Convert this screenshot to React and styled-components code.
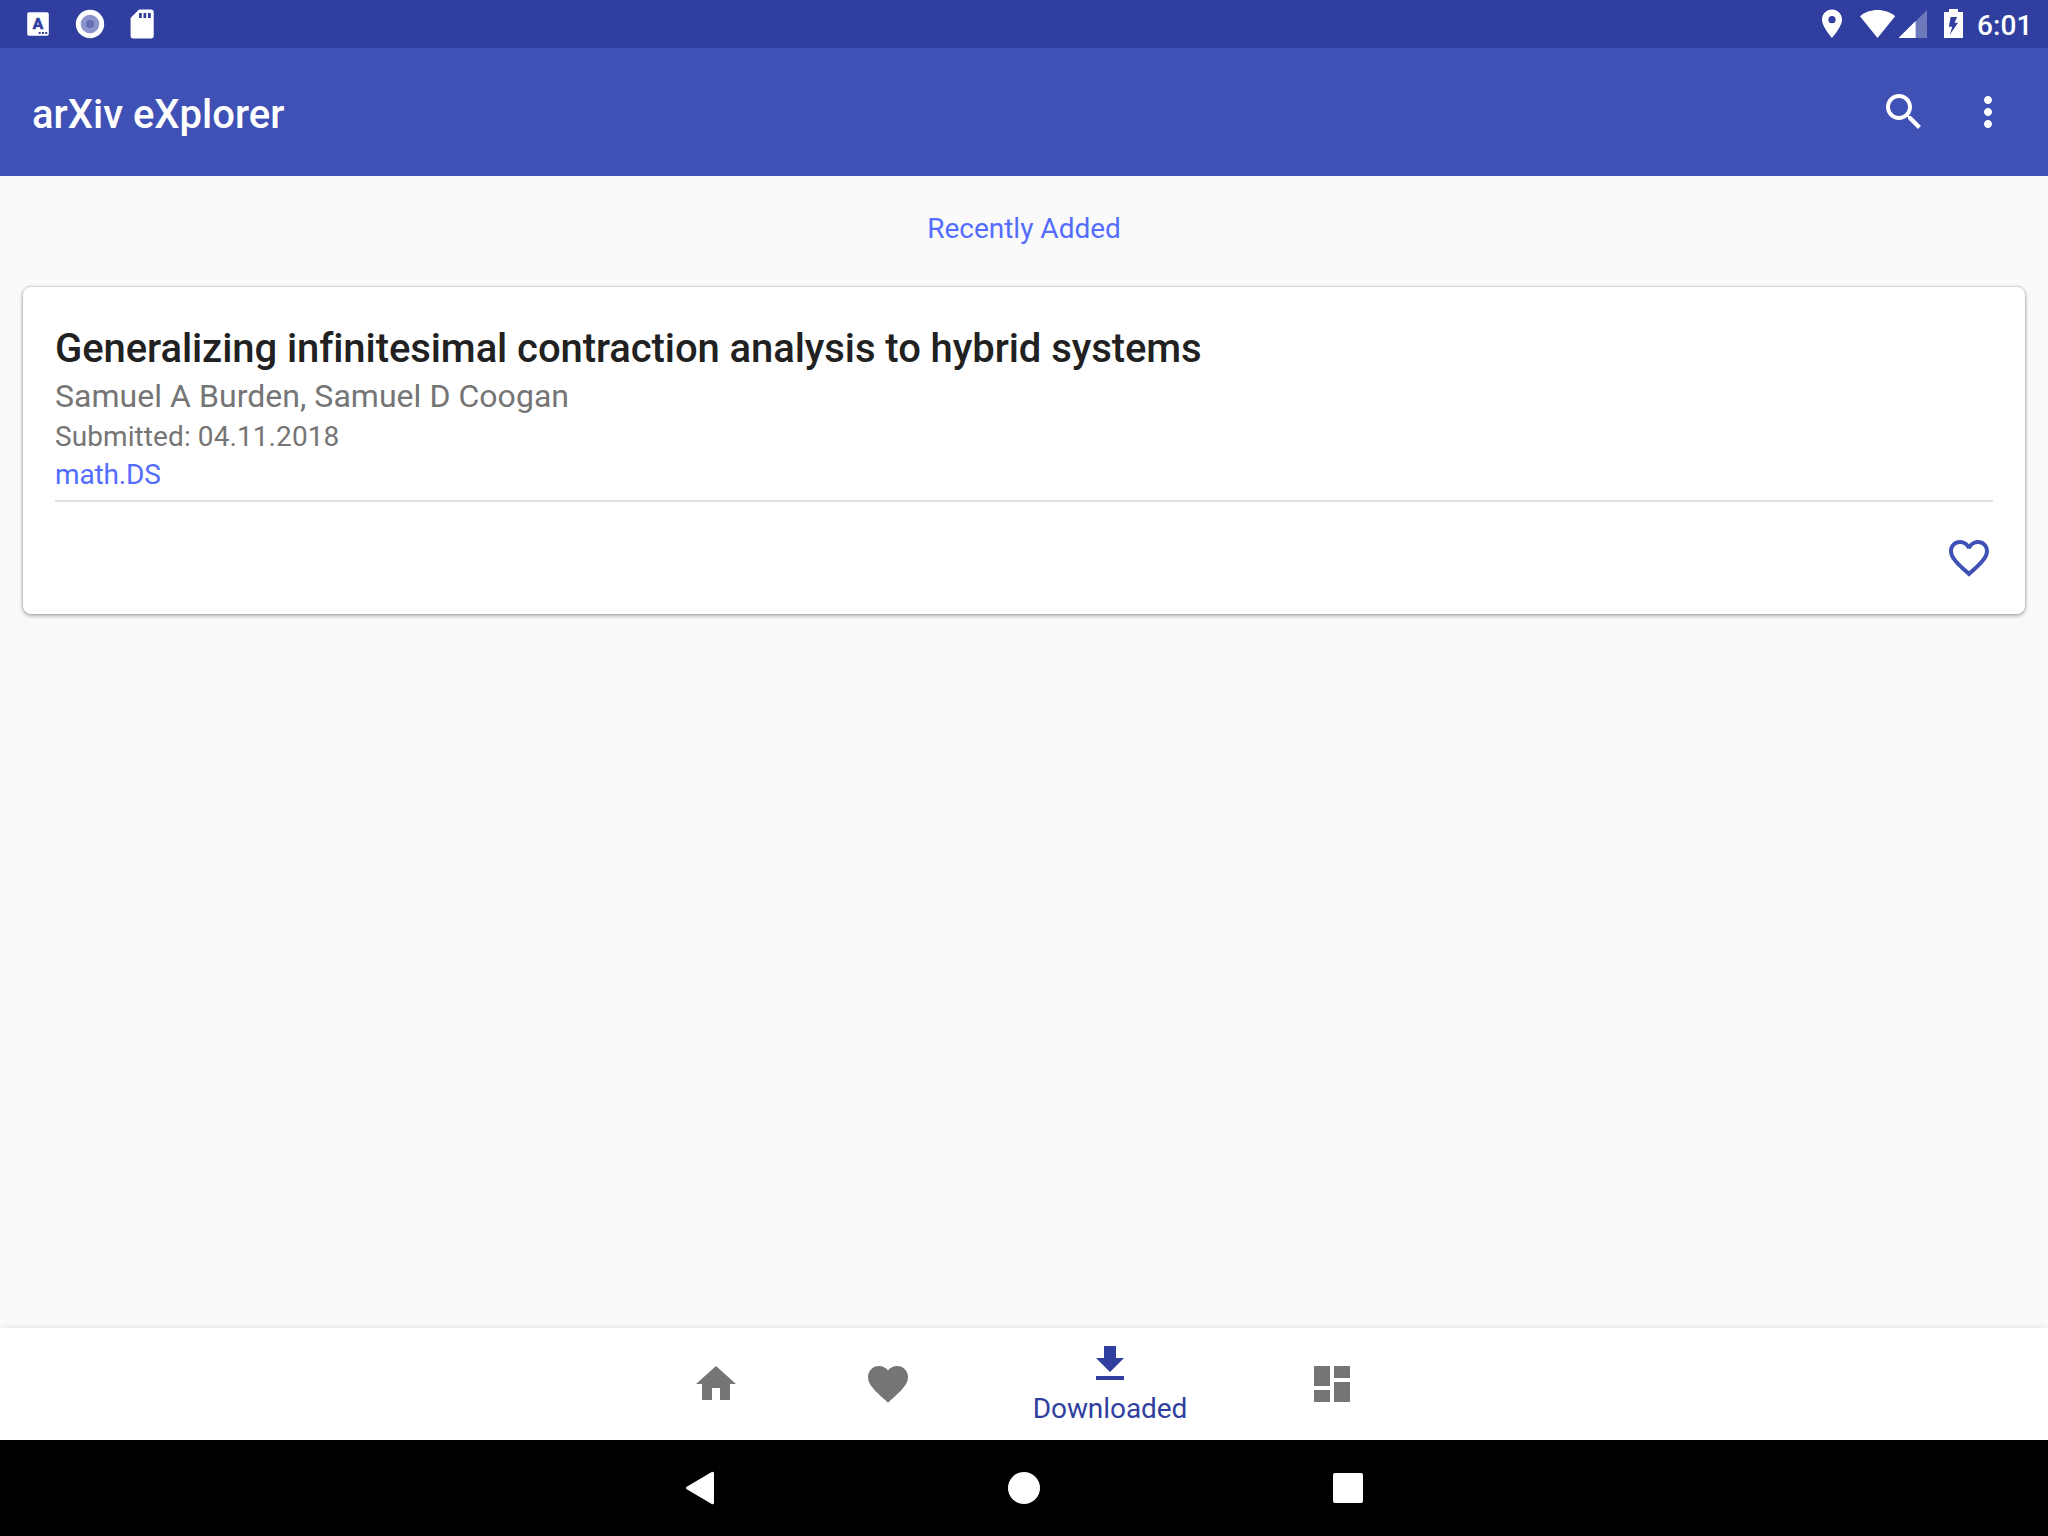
import React from "react";
import styled, { createGlobalStyle } from "styled-components";

const colors = {
  primary: "#3f51b5",
  primaryDark: "#303f9f",
  accent: "#536dfe",
  surface: "#ffffff",
  background: "#fafafa",
  text: "#212121",
  secondary: "#757575",
  divider: "#e0e0e0",
};

const GlobalStyle = createGlobalStyle`
  *, *::before, *::after { box-sizing: border-box; }
  body {
    margin: 0;
    background: ${colors.background};
    font-family: Roboto, "Noto Sans", sans-serif;
  }
  h1, h2, p { margin: 0; }
`;

const Screen = styled.div`
  display: flex;
  flex-direction: column;
  width: 2048px;
  height: 1536px;
  overflow: hidden;
  background: ${colors.background};
`;

const StatusBar = styled.header`
  display: flex;
  justify-content: space-between;
  align-items: center;
  flex: none;
  height: 48px;
  padding: 0 18px 0 20px;
  background: ${colors.primaryDark};
  color: #fff;
`;

const StatusGroup = styled.div`
  display: flex;
  align-items: center;
  height: 48px;
`;

const Notifications = styled(StatusGroup)`
  gap: 16px;
`;

const Clock = styled.span`
  width: 53px;
  margin-left: 14px;
  padding-top: 2px;
  font-size: 28px;
  font-weight: 500;
  line-height: 33px;
  letter-spacing: 0.1px;
  white-space: nowrap;
`;

const AppBar = styled.div`
  display: flex;
  justify-content: space-between;
  align-items: center;
  flex: none;
  height: 128px;
  padding: 0 36px 0 32px;
  background: ${colors.primary};
  color: #fff;
`;

const AppTitle = styled.h1`
  padding-top: 5px;
  font-size: 40px;
  font-weight: 500;
  line-height: 47px;
`;

const Actions = styled.div`
  display: flex;
  gap: 36px;
`;

const IconButton = styled.button`
  display: flex;
  padding: 0;
  border: 0;
  background: none;
  color: inherit;
`;

const Content = styled.main`
  flex: 1;
  padding: 36px 23px 0;
`;

const SectionLabel = styled.p`
  height: 75px;
  color: ${colors.accent};
  font-size: 28px;
  line-height: 33px;
  text-align: center;
`;

const Card = styled.article`
  height: 327px;
  padding: 38px 32px 0;
  border-radius: 8px;
  background: ${colors.surface};
  box-shadow: 0 2px 4px rgba(0, 0, 0, 0.27), 0 0 3px rgba(0, 0, 0, 0.28);
`;

const PaperTitle = styled.h2`
  margin-bottom: 5px;
  color: ${colors.text};
  font-size: 40px;
  font-weight: 500;
  line-height: 47px;
  letter-spacing: -0.08px;
  font-variant-ligatures: common-ligatures;
`;

const Authors = styled.p`
  margin-bottom: 5px;
  color: ${colors.secondary};
  font-size: 32px;
  line-height: 38px;
  letter-spacing: 0.04px;
`;

const Meta = styled.p`
  margin-bottom: ${(p) => p.$gap}px;
  color: ${(p) => p.$color};
  font-size: 28px;
  line-height: 33px;
  letter-spacing: ${(p) => p.$tracking}px;
`;

const CardActions = styled.div`
  display: flex;
  justify-content: flex-end;
  padding-top: 32px;
  border-top: 2px solid ${colors.divider};
  color: ${colors.primary};
`;

const BottomNav = styled.nav`
  display: flex;
  justify-content: center;
  flex: none;
  height: 112px;
  background: ${colors.surface};
  box-shadow: 0 -1px 6px rgba(0, 0, 0, 0.09);
`;

const Tab = styled.a`
  display: flex;
  flex-direction: column;
  align-items: center;
  width: ${(p) => (p.$active ? 272 : 172)}px;
  padding-top: ${(p) => (p.$active ? 12 : 32)}px;
  color: ${(p) => (p.$active ? colors.primaryDark : colors.secondary)};
`;

const TabLabel = styled.span`
  margin-top: 4px;
  font-size: 28px;
  line-height: 33px;
  letter-spacing: -0.06px;
`;

const SystemNav = styled.footer`
  display: flex;
  justify-content: center;
  flex: none;
  height: 96px;
  background: #000;
  color: #fff;
`;

const SystemKey = styled.button`
  display: flex;
  justify-content: center;
  align-items: center;
  width: 324px;
  padding: 0;
  border: 0;
  background: none;
  color: inherit;
`;

const Svg = styled.svg`
  display: block;
  flex: none;
  fill: currentColor;
  margin-right: ${(p) => p.$after || 0}px;
`;

const KeyboardLetter = styled.text`
  fill: ${colors.primaryDark};
  stroke: ${colors.primaryDark};
  stroke-width: 0.7px;
  font-size: 15.5px;
  font-weight: 700;
  text-anchor: middle;
`;

const paths = {
  search:
    "M15.5 14h-.79l-.28-.27C15.41 12.59 16 11.11 16 9.5 16 5.91 13.09 3 9.5 3S3 5.91 3 9.5 5.91 16 9.5 16c1.61 0 3.09-.59 4.23-1.57l.27.28v.79l5 4.99L20.49 19l-4.99-5zm-6 0C7.01 14 5 11.99 5 9.5S7.01 5 9.5 5 14 7.01 14 9.5 11.99 14 9.5 14z",
  more: "M12 8c1.1 0 2-.9 2-2s-.9-2-2-2-2 .9-2 2 .9 2 2 2zm0 2c-1.1 0-2 .9-2 2s.9 2 2 2 2-.9 2-2-.9-2-2-2zm0 6c-1.1 0-2 .9-2 2s.9 2 2 2 2-.9 2-2-.9-2-2-2z",
  heartOutline:
    "M16.5 3c-1.74 0-3.41.81-4.5 2.09C10.91 3.81 9.24 3 7.5 3 4.42 3 2 5.42 2 8.5c0 3.78 3.4 6.86 8.55 11.54L12 21.35l1.45-1.32C18.6 15.36 22 12.28 22 8.5 22 5.42 19.58 3 16.5 3zm-4.4 15.55l-.1.1-.1-.1C7.14 14.24 4 11.39 4 8.5 4 6.5 5.5 5 7.5 5c1.54 0 3.04.99 3.57 2.36h1.87C13.46 5.99 14.96 5 16.5 5c2 0 3.5 1.5 3.5 3.5 0 2.89-3.14 5.74-7.9 10.05z",
  heart:
    "M12 21.35l-1.45-1.32C5.4 15.36 2 12.28 2 8.5 2 5.42 4.42 3 7.5 3c1.74 0 3.41.81 4.5 2.09C13.09 3.81 14.76 3 16.5 3 19.58 3 22 5.42 22 8.5c0 3.78-3.4 6.86-8.55 11.54L12 21.35z",
  home: "M10 20v-6h4v6h5v-8h3L12 3 2 12h3v8z",
  download: "M19 9h-4V3H9v6H5l7 7 7-7zM5 18v2h14v-2H5z",
  dashboard: "M3 13h8V3H3v10zm0 8h8v-6H3v6zm10 0h8V11h-8v10zm0-18v6h8V3h-8z",
};

const Icon = ({ name }) => (
  <Svg width="48" height="48" viewBox="0 0 24 24">
    <path d={paths[name]} />
  </Svg>
);

const KeyboardIcon = () => (
  <Svg width="36" height="48" viewBox="0 0 36 48">
    <path
      fillRule="evenodd"
      d="M9 12.200h18a1.800 1.800 0 0 1 1.800 1.800v20a1.800 1.800 0 0 1-1.800 1.800H9A1.800 1.800 0 0 1 7.200 34V14A1.800 1.800 0 0 1 9 12.200zM18.700 32h2v2h-2zM22 32h2v2h-2zM25.200 32h2v2h-2z"
    />
    <KeyboardLetter x="18" y="29.2">
      A
    </KeyboardLetter>
  </Svg>
);

const RecordIcon = () => (
  <Svg width="36" height="48" viewBox="0 0 36 48">
    <circle cx="18" cy="24" r="14.2" />
    <circle cx="18" cy="24" r="9.3" fill="#8c95cb" />
    <circle cx="18" cy="24" r="4.2" fill="#646fb7" />
  </Svg>
);

const SdCardIcon = () => (
  <Svg width="36" height="48" viewBox="0 0 36 48">
    <path
      fillRule="evenodd"
      d="M15 9.5h12A2.7 2.7 0 0 1 29.7 12.200v23.600A2.700 2.700 0 0 1 27 38.500H9.300A2.700 2.700 0 0 1 6.600 35.800V18zM15 13v5h2.800v-5zM19.500 13v5h2.700v-5zM24 13v5h2.800v-5z"
    />
  </Svg>
);

const LocationIcon = () => (
  <Svg width="20" height="48" viewBox="0 0 20 48" $after={18}>
    <path
      fillRule="evenodd"
      d="M10 9.600C4.400 9.600 0 14 0 19.600 0 27 10 38 10 38s10-11 10-18.400C20 14 15.600 9.600 10 9.600zm0 6.500a3.600 3.600 0 1 1 0 7.200 3.600 3.600 0 0 1 0-7.200z"
    />
  </Svg>
);

const WifiIcon = () => (
  <Svg width="36" height="48" viewBox="0 0 36 48" $after={3}>
    <path d="M17.500 38 0 16.200C4.600 12 11 9.900 17.500 9.900S30.500 12 35.200 16.200z" />
  </Svg>
);

const SignalIcon = () => (
  <Svg width="28" height="48" viewBox="0 0 28 48" $after={17}>
    <path d="M0 38 28 10V38z" opacity=".3" />
    <path d="M-.5 38 16.600 21V38z" />
  </Svg>
);

const BatteryIcon = () => (
  <Svg width="19" height="48" viewBox="0 0 19 48">
    <path
      fillRule="evenodd"
      d="M0 12h5V9h9v3h5v26H0zM6.700 17 4.800 26.700h3.400L5.800 34.800 14 22.800h-3.500L13.200 17z"
    />
  </Svg>
);

const BackKey = () => (
  <Svg width="48" height="48" viewBox="0 0 48 48">
    <path d="M10.700 22.700 35.300 8.300Q38 6.800 38 9.600V38.400Q38 41.200 35.300 39.700L10.700 25.300Q9 24 10.700 22.700z" />
  </Svg>
);

const HomeKey = () => (
  <Svg width="48" height="48" viewBox="0 0 48 48">
    <circle cx="24" cy="24" r="16" />
  </Svg>
);

const RecentsKey = () => (
  <Svg width="48" height="48" viewBox="0 0 48 48">
    <rect x="9" y="9" width="30" height="30" rx="2" />
  </Svg>
);

const tabs = [
  { icon: "home" },
  { icon: "heart" },
  { icon: "download", label: "Downloaded", active: true },
  { icon: "dashboard" },
];

export default function App() {
  return (
    <>
      <GlobalStyle />
      <Screen>
        <StatusBar>
          <Notifications>
            <KeyboardIcon />
            <RecordIcon />
            <SdCardIcon />
          </Notifications>
          <StatusGroup>
            <LocationIcon />
            <WifiIcon />
            <SignalIcon />
            <BatteryIcon />
            <Clock>6:01</Clock>
          </StatusGroup>
        </StatusBar>
        <AppBar>
          <AppTitle>arXiv eXplorer</AppTitle>
          <Actions>
            <IconButton>
              <Icon name="search" />
            </IconButton>
            <IconButton>
              <Icon name="more" />
            </IconButton>
          </Actions>
        </AppBar>
        <Content>
          <SectionLabel>Recently Added</SectionLabel>
          <Card>
            <PaperTitle>
              Generalizing infinitesimal contraction analysis to hybrid systems
            </PaperTitle>
            <Authors>Samuel A Burden, Samuel D Coogan</Authors>
            <Meta $color={colors.secondary} $gap={5} $tracking={0.09}>
              Submitted: 04.11.2018
            </Meta>
            <Meta $color={colors.accent} $gap={9} $tracking={-0.15}>
              math.DS
            </Meta>
            <CardActions>
              <IconButton>
                <Icon name="heartOutline" />
              </IconButton>
            </CardActions>
          </Card>
        </Content>
        <BottomNav>
          {tabs.map((tab) => (
            <Tab key={tab.icon} $active={tab.active}>
              <Icon name={tab.icon} />
              {tab.label && <TabLabel>{tab.label}</TabLabel>}
            </Tab>
          ))}
        </BottomNav>
        <SystemNav>
          <SystemKey>
            <BackKey />
          </SystemKey>
          <SystemKey>
            <HomeKey />
          </SystemKey>
          <SystemKey>
            <RecentsKey />
          </SystemKey>
        </SystemNav>
      </Screen>
    </>
  );
}
